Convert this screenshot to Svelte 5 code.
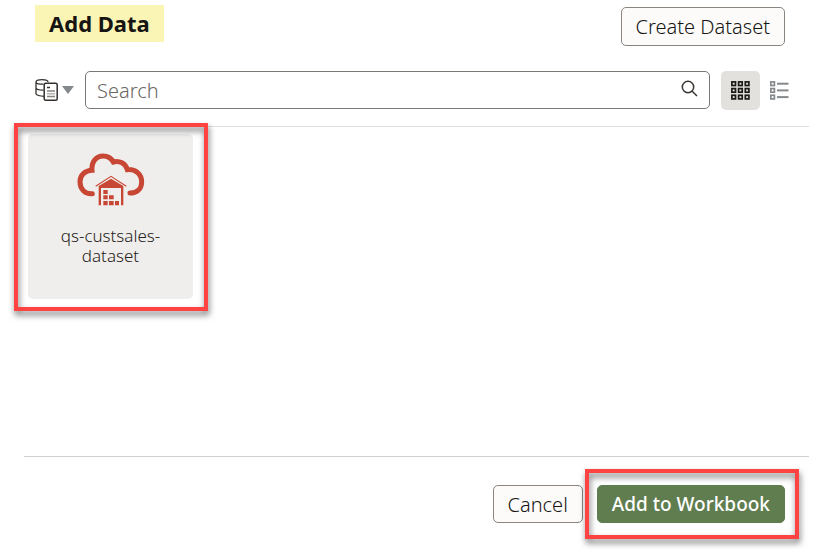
<script>
  const datasets = ['qs-custsales-dataset'];
  const cells = [0, 6.7, 13.4];
  let query = $state('');
  let view = $state('grid');
  let selected = $state('qs-custsales-dataset');
  const shown = $derived(datasets.filter((d) => d.includes(query.toLowerCase())));
</script>

<main class="dialog">
  <header>
    <h1>Add Data</h1>
    <button class="btn" type="button">Create Dataset</button>
  </header>

  <div class="toolbar">
    <button class="source" type="button" aria-label="Source type">
      <svg width="24" height="24" viewBox="0 0 24 24" fill="none" stroke="#33302d" stroke-width="1.3">
        <path d="M9.5 18.3C4.500 18.300 1 17 1 15.800V4C1 .8 13 .8 13 4M1 4C1 5.600 4 6.200 8.500 6.200M1 9.800C1 11.200 4 12.200 8.500 12.200" />
        <rect x="9.200" y="5.200" width="13" height="17" rx="1.500" fill="#fff" stroke-width="1.500" />
        <path d="M12 9.500h3" stroke-width="1.500" />
        <path d="M12 13h8M12 18.500h8" stroke="#85817d" />
        <path d="M12 15.800h8" stroke="#aaa7a4" />
      </svg>
      <svg width="12" height="8" viewBox="0 0 12 8"><path d="M0 0h12L6 8z" fill="#85898c" /></svg>
    </button>
    <div class="search">
      <input type="text" placeholder="Search" aria-label="Search" bind:value={query} />
      <svg width="18" height="18" viewBox="0 0 18 18" fill="none" stroke="#393633" stroke-width="1.500" aria-hidden="true">
        <circle cx="7" cy="7" r="5.700" />
        <path d="M11 11l5 5" />
      </svg>
    </div>
    <div class="views">
      <button type="button" class:active={view === 'grid'} aria-label="Grid view" onclick={() => (view = 'grid')}>
        <svg width="19" height="19" viewBox="0 0 19 19" fill="none" stroke="#1b1a18" stroke-width="1.700">
          {#each cells as y}
            {#each cells as x}
              <rect x={x + 0.9} y={y + 0.9} width="3.600" height="3.600" />
            {/each}
          {/each}
        </svg>
      </button>
      <button type="button" class:active={view === 'list'} aria-label="List view" onclick={() => (view = 'list')}>
        <svg width="19" height="19" viewBox="0 0 19 19" fill="none" stroke="#85898c" stroke-width="1.700">
          {#each cells as y}
            <rect x=".8" y={y + 0.9} width="3.600" height="3.600" />
            <path d="M7 {y + 2.7}H18.500" stroke-width="2" />
          {/each}
        </svg>
      </button>
    </div>
  </div>

  <section class="content">
    {#each shown as name}
      <div class="callout">
        <button class="tile" type="button" aria-pressed={selected === name} onclick={() => (selected = name)}>
          <svg width="68" height="54" viewBox="22 23 204 162" fill="#c74634">
            <path
              d="M68 145C46 147 31 131 31 109C31 89 46 76 67 75C65 49 80 32 100 32C115 32 125 39 131 50C149 45 168 54 173 73C198 71 216 87 216 110C216 132 200 143 181 143"
              fill="none" stroke="#c74634" stroke-width="15" stroke-linecap="round" stroke-linejoin="miter" />
            <path d="M78 123L124 93L170 123" fill="none" stroke="#c74634" stroke-width="3.500" />
            <path d="M87 180V122L124 100L161 122V180H154V128H94V180z" />
            <path d="M101 134h13v12h-13zM101 150h13v12h-13zM118 150h14v12h-14zM101 167h13v13h-13zM118 167h14v13h-14zM136 167h12v13h-12z" />
          </svg>
          <span>{name}</span>
        </button>
      </div>
    {/each}
  </section>

  <footer>
    <button class="btn" type="button">Cancel</button>
    <div class="callout">
      <button class="btn primary" type="button">Add to Workbook</button>
    </div>
  </footer>
</main>

<style>
  :global(body) {
    background: #fff;
  }
  .dialog {
    box-sizing: border-box;
    min-height: 100vh;
    display: flex;
    flex-direction: column;
    padding: 5px 21px 0 24px;
    font-family: 'Noto Sans', sans-serif;
    font-size: 20px;
    font-weight: 300;
    color: #161513;
  }
  button,
  input {
    font: inherit;
    color: inherit;
    box-sizing: border-box;
    margin: 0;
  }
  button {
    cursor: pointer;
  }
  svg {
    display: block;
    flex: none;
  }
  header {
    display: flex;
    justify-content: space-between;
    align-items: flex-start;
    padding: 0 24px 25px 11px;
  }
  h1 {
    margin: 0;
    padding: 0 14px;
    font-size: 22px;
    line-height: 37px;
    font-weight: 700;
    background: #faf4b5;
  }
  .btn {
    height: 38px;
    padding: 0 14px;
    border: 1px solid #8b8580;
    border-radius: 5px;
    background: #fcfbfa;
    white-space: nowrap;
  }
  header .btn {
    height: 39px;
    margin-top: 2px;
  }
  .toolbar {
    display: flex;
    align-items: flex-start;
    padding: 0 10px 16px 11px;
    border-bottom: 1px solid #dfdfdd;
  }
  .source {
    display: flex;
    align-items: center;
    gap: 3px;
    height: 38px;
    padding: 0;
    border: 0;
    background: none;
    margin-right: 11px;
  }
  .search {
    position: relative;
    flex: 1;
    display: flex;
  }
  .search input {
    width: 100%;
    height: 38px;
    padding: 0 40px 0 11px;
    border: 1px solid #7b7773;
    border-radius: 5px;
    background: #fff;
  }
  .search input::placeholder {
    color: #6b6763;
    opacity: 1;
  }
  .search svg {
    position: absolute;
    right: 11px;
    top: 9px;
  }
  .views {
    display: flex;
    margin-left: 11px;
  }
  .views button {
    width: 39px;
    height: 39px;
    padding: 0 10px;
    border: 0;
    border-radius: 5px;
    background: none;
  }
  .views .active {
    background: #e2e1de;
  }
  .content {
    flex: 1;
    display: flex;
    flex-wrap: wrap;
    align-items: flex-start;
    gap: 20px;
    padding: 7px 4px;
  }
  .callout {
    position: relative;
    display: flex;
  }
  .callout::after {
    content: '';
    position: absolute;
    inset: -11px -15px -12px -14px;
    border: 4px solid #ff4242;
    filter: drop-shadow(1px 4px 3px rgb(0 0 0 / 55%));
    pointer-events: none;
  }
  footer .callout::after {
    inset: -16px -14px -16px -12px;
  }
  .tile {
    width: 165px;
    height: 165px;
    display: flex;
    flex-direction: column;
    align-items: center;
    gap: 19px;
    padding: 19px 24px 0;
    border: 0;
    border-radius: 5px;
    background: #f0eeec;
    font-size: 17px;
    line-height: 20px;
    color: #262320;
  }
  footer {
    display: flex;
    justify-content: flex-end;
    gap: 14px;
    padding: 28px 24px 34px;
    border-top: 1px solid #d0cfcd;
  }
  .primary {
    border-color: #5f7d4f;
    background: #5f7d4f;
    color: #fff;
    font-size: 19px;
    font-weight: 500;
  }
</style>
